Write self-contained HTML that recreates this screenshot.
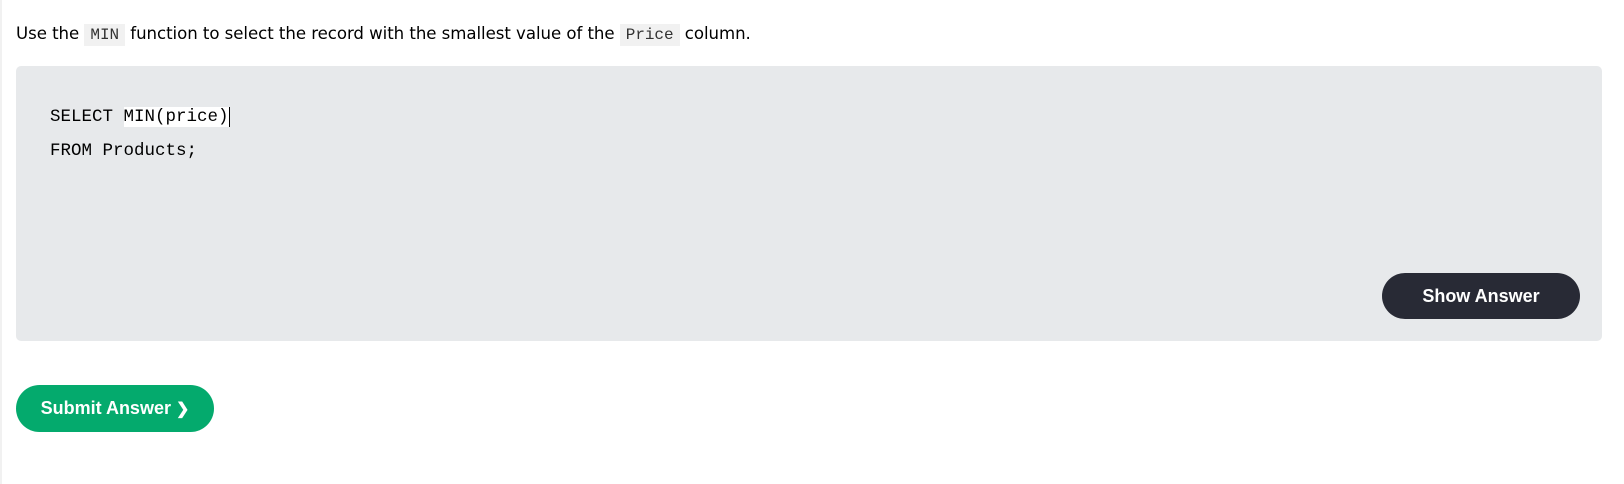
<!DOCTYPE html>
<html><head><meta charset="utf-8"><style>
html,body{margin:0;padding:0;background:#fff;width:1624px;height:484px;overflow:hidden}
body{position:relative;font-family:"DejaVu Sans","Liberation Sans",sans-serif;color:#000}
.lb{position:absolute;left:0;top:0;width:2px;height:484px;background:#f1f1f1}
.p{position:absolute;left:16px;top:22px;font-size:16.6px;line-height:24px;white-space:nowrap;letter-spacing:-0.05px}
.p code{font-family:"Liberation Mono",monospace;font-size:16px;background:#f1f1f1;padding:2px 6px;color:#333}
.box{position:absolute;left:16px;top:66px;width:1586px;height:275px;background:#e7e9eb;border-radius:5px}
.code{position:absolute;left:50px;top:100px;font-family:"Liberation Mono",monospace;font-size:17.5px;line-height:34px;white-space:pre;color:#000}
.hl{background:#fff;border-right:1px solid #000}
.btn{position:absolute;color:#fff;font-family:"Liberation Sans",sans-serif;font-weight:bold;font-size:18px;display:flex;align-items:center;justify-content:center;border-radius:24px}
.show{left:1382px;top:273px;width:198px;height:46px;background:#282a35}
.sub{left:16px;top:385px;width:198px;height:47px;background:#04aa6d}
</style></head><body>
<div class="lb"></div>
<div class="p">Use the <code>MIN</code> function to select the record with the smallest value of the <code>Price</code> column.</div>
<div class="box"></div>
<div class="code">SELECT <span class="hl">MIN(price)</span>
FROM Products;</div>
<div class="btn show">Show Answer</div>
<div class="btn sub">Submit Answer&nbsp;<span style="font-size:16px">&#10095;</span></div>
</body></html>
